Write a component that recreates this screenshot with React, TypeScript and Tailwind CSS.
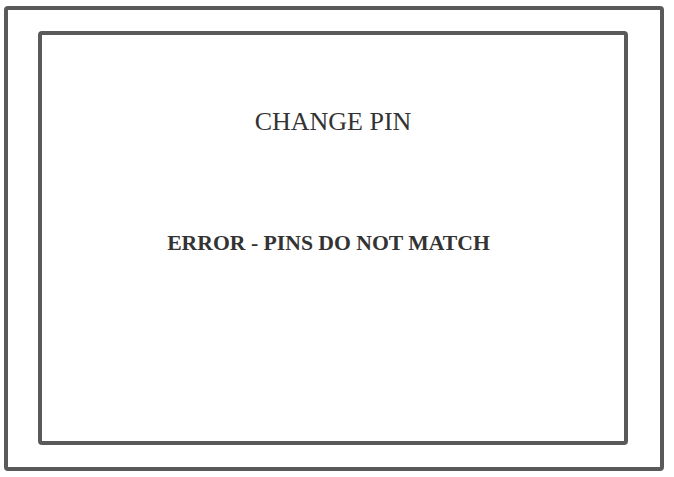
export default function App() {
  return (
    <div className="w-[674px] h-[477px] bg-white pt-[6px] pl-[4px]">
      <div className="w-[660px] h-[465px] border-4 border-[#5a5a5a] rounded-[4px] pt-[21px] pl-[30px]">
        <div className="w-[590px] h-[414px] border-4 border-[#5a5a5a] rounded-[4px] flex flex-col items-center pt-[74px] text-[#333333] font-['Liberation_Serif',serif]">
          <h1 className="text-[26px] leading-none">CHANGE PIN</h1>
          <p className="mt-[98px] pr-[9px] text-[21.7px] leading-none font-bold">
            ERROR - PINS DO NOT MATCH
          </p>
        </div>
      </div>
    </div>
  );
}
